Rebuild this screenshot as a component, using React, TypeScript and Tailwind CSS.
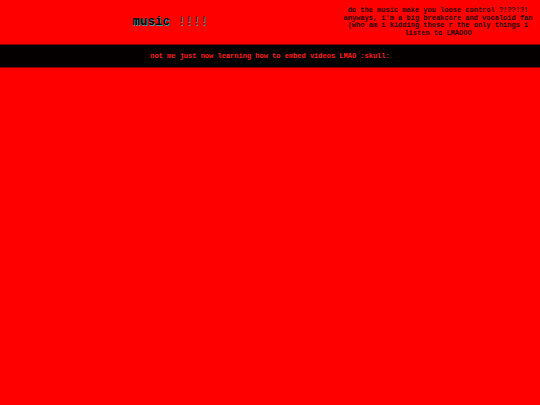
import React from 'react';

export default function App() {
  return (
    <div className="min-h-[405px] w-full bg-[#ff0000] font-['Liberation_Mono',monospace] font-bold">
      <header className="flex h-[44px] items-center">
        <div className="flex flex-1 justify-center">
          <h1 className="text-[12.5px] leading-none text-black [text-shadow:1px_1px_0_#2aa5a5]">
            music <span className="text-[#8a0000] [text-shadow:1px_1px_0_#6a8a8a]">!!!!</span>
          </h1>
        </div>
        <div className="w-[200px] pr-1 text-center text-[7px] leading-[7.5px] text-[#1a0000]">
          <p>do the music make you loose control ?!??!?!</p>
          <p>anyways, i'm a big breakcore and vocaloid fan (who am i kidding those r the only things i listen to LMAOOO</p>
        </div>
      </header>
      <div className="flex h-[24px] items-center justify-center border-y border-[#8a0000] bg-[#050000]">
        <p className="text-[7px] text-[#ff1a1a]">not me just now learning how to embed videos LMAO :skull:</p>
      </div>
    </div>
  );
}
